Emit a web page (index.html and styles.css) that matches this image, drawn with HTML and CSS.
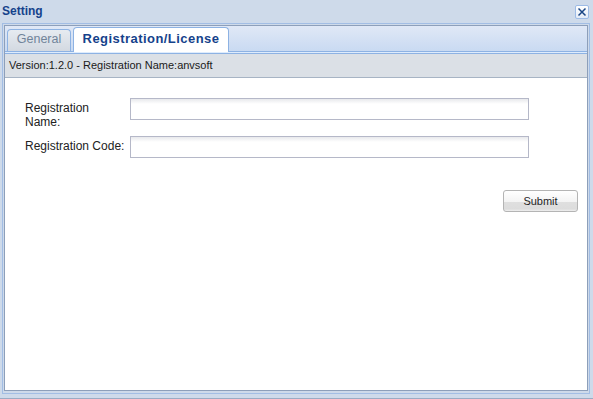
FILE: index.html
```html
<!DOCTYPE html>
<html>
<head>
<meta charset="utf-8">
<link rel="stylesheet" href="styles.css">
</head>
<body>
<div class="window">
  <div class="header">
    <span class="title">Setting</span>
    <button class="close" type="button" aria-label="Close">
      <svg width="10" height="10" viewBox="0 0 10 10"><path d="M1.5 1.5L8.5 8.5M8.5 1.5L1.5 8.5" stroke="#1a4685" stroke-width="1.5" fill="none"/></svg>
    </button>
  </div>
  <div class="frame">
    <div class="panel">
      <div class="tabstrip">
        <div class="tab">General</div>
        <div class="tab active">Registration/License</div>
      </div>
      <div class="spacer"></div>
      <div class="toolbar">Version:1.2.0 - Registration Name:anvsoft</div>
      <div class="body">
        <form class="form">
          <div class="row"><label class="label">Registration Name:</label><input class="field" type="text"></div>
          <div class="row"><label class="label">Registration Code:</label><input class="field" type="text"></div>
          <div class="actions"><button class="btn" type="button">Submit</button></div>
        </form>
      </div>
    </div>
  </div>
</div>
</body>
</html>
```
FILE: styles.css
```css
html, body {
  margin: 0;
  padding: 0;
}
body {
  width: 593px;
  height: 399px;
  overflow: hidden;
  background: #cedaea;
  font-family: "Liberation Sans", Arial, sans-serif;
}
.window {
  height: 399px;
  box-sizing: border-box;
  border-bottom: 1px solid #9aabc4;
  padding-bottom: 4px;
  display: flex;
  flex-direction: column;
}
.header {
  height: 23px;
  display: flex;
  align-items: center;
  padding-left: 2px;
}
.title {
  font-weight: bold;
  font-size: 12px;
  line-height: 23px;
  color: #15428b;
}
.close {
  margin-left: auto;
  margin-right: 4px;
  width: 14px;
  height: 14px;
  padding: 0;
  border: 1px solid #9dbbe6;
  border-radius: 2px;
  background: linear-gradient(#ffffff, #e3ebf7);
  display: flex;
  align-items: center;
  justify-content: center;
}
.frame {
  flex: 1;
  margin: 0 3px 0 2px;
  border: 1px solid #a2bde4;
  padding: 1px 1px 2px 1px;
  display: flex;
  flex-direction: column;
  min-height: 0;
}
.panel {
  flex: 1;
  border: 1px solid #8d9fba;
  background: #ffffff;
  display: flex;
  flex-direction: column;
  min-height: 0;
}
.tabstrip {
  height: 25px;
  border-bottom: 1px solid #8db2e3;
  background: linear-gradient(#e0e8f6, #c9daf2);
  display: flex;
  align-items: flex-end;
  padding-left: 2px;
  gap: 2px;
}
.tab {
  box-sizing: border-box;
  width: 64px;
  height: 22px;
  border: 1px solid #8db2e3;
  border-bottom: none;
  border-radius: 4px 4px 0 0;
  background: linear-gradient(#e6ebf1, #d3d9e1);
  color: #71849a;
  font-size: 12.5px;
  line-height: 18px;
  text-align: center;
}
.tab.active {
  width: 156px;
  height: 25px;
  margin-bottom: -1px;
  padding-top: 2px;
  background: #ffffff;
  color: #15428b;
  font-weight: bold;
  font-size: 13px;
  letter-spacing: 0.45px;
  position: relative;
}
.spacer {
  height: 1px;
  background: #deecfd;
  border-bottom: 1px solid #8db2e3;
}
.toolbar {
  height: 23px;
  line-height: 23px;
  border-bottom: 1px solid #a7b4c4;
  background: #dbe0e6;
  padding-left: 4px;
  font-size: 11px;
  color: #1a1a1a;
}
.body {
  flex: 1;
  padding: 20px 9px 0 20px;
}
.form {
  margin: 0;
  display: flex;
  flex-direction: column;
  gap: 7px;
}
.row {
  display: flex;
  align-items: flex-start;
}
.label {
  width: 101px;
  margin-right: 4px;
  padding-top: 3px;
  font-size: 12px;
  line-height: 14px;
  color: #222222;
}
.field {
  box-sizing: border-box;
  width: 399px;
  height: 22px;
  margin: 0;
  border: 1px solid #b5b8c8;
  background: linear-gradient(#e8e9ec, #ffffff 5px);
  padding: 0 3px;
  outline: none;
}
.actions {
  display: flex;
  justify-content: flex-end;
  margin-top: 25px;
}
.btn {
  box-sizing: border-box;
  width: 75px;
  height: 22px;
  padding: 0;
  border: 1px solid #b4b4b4;
  border-radius: 3px;
  background: linear-gradient(#ffffff 0, #f3f3f3 55%, #dfdfdf 56%, #dcdcdc 90%, #efefef 100%);
  font-family: "Liberation Sans", Arial, sans-serif;
  font-size: 11px;
  color: #1e1e1e;
}
```
